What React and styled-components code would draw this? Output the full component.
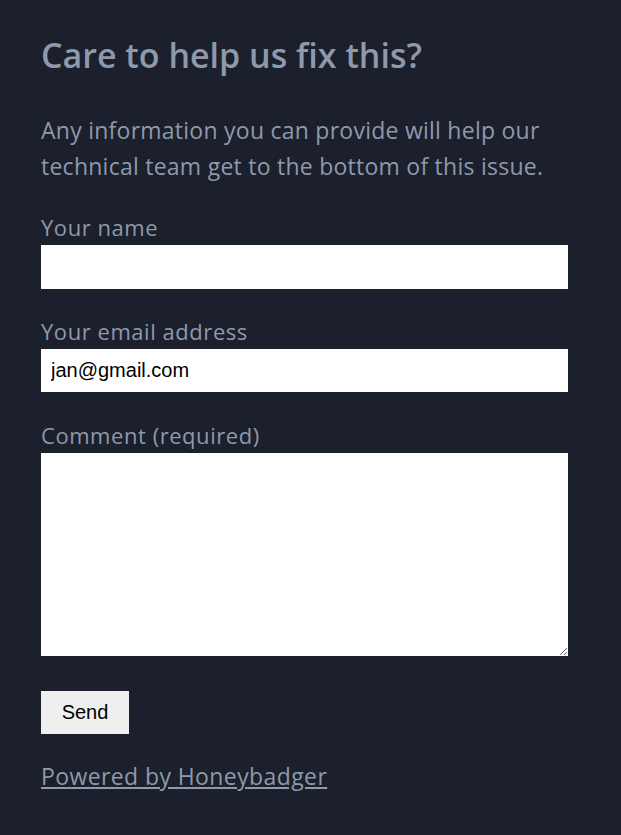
import React from 'react';
import styled, { createGlobalStyle } from 'styled-components';

const Global = createGlobalStyle`
  html, body {
    margin: 0;
    padding: 0;
    background: #1b202c;
  }
  body {
    font-family: "Open Sans", Lato, sans-serif;
    color: #8e99ab;
  }
`;

const Page = styled.div`
  width: 527px;
  padding: 30px 0 40px 41px;
`;

const Title = styled.h1`
  margin: 0 0 32px;
  font-size: 34px;
  font-weight: 600;
  line-height: 50px;
  letter-spacing: 0;
`;

const Intro = styled.p`
  margin: 0 0 28px;
  font-size: 23px;
  line-height: 36px;
  letter-spacing: 0.25px;
`;

const Field = styled.div`
  display: flex;
  flex-direction: column;
  gap: 3px;
  margin-bottom: ${(p) => p.$space || 27}px;
`;

const Label = styled.label`
  font-size: 22px;
  line-height: 30px;
  letter-spacing: 0.55px;
`;

const Input = styled.input`
  box-sizing: border-box;
  width: 100%;
  height: ${(p) => p.$h || 44}px;
  border: none;
  padding: 0 10px;
  font-family: "Liberation Sans", Arial, sans-serif;
  font-size: 20px;
  color: #000;
  background: #fff;
  outline: none;
`;

const TextArea = styled.textarea`
  box-sizing: border-box;
  width: 100%;
  height: 203px;
  border: none;
  padding: 10px;
  font-family: "Liberation Sans", Arial, sans-serif;
  font-size: 20px;
  background: #fff;
  resize: vertical;
  display: block;
  outline: none;
`;

const Button = styled.button`
  width: 88px;
  height: 43px;
  border: none;
  background: #efefef;
  color: #000;
  font-family: "Liberation Sans", Arial, sans-serif;
  font-size: 20px;
  cursor: pointer;
`;

const Footer = styled.p`
  margin: 26px 0 0;
  font-size: 23px;
  line-height: 32px;
  letter-spacing: 0.4px;
`;

const Link = styled.a`
  color: #8e99ab;
  text-decoration: underline;
`;

export default function App() {
  return (
    <>
      <Global />
      <Page>
        <Title>Care to help us fix this?</Title>
        <Intro>
          Any information you can provide will help our technical team get to the bottom of this issue.
        </Intro>
        <form onSubmit={(e) => e.preventDefault()}>
          <Field>
            <Label htmlFor="name">Your name</Label>
            <Input id="name" type="text" />
          </Field>
          <Field $space={28}>
            <Label htmlFor="email">Your email address</Label>
            <Input id="email" type="email" $h={43} defaultValue="jan@gmail.com" />
          </Field>
          <Field $space={35}>
            <Label htmlFor="comment">Comment (required)</Label>
            <TextArea id="comment" />
          </Field>
          <Button type="submit">Send</Button>
        </form>
        <Footer>
          <Link href="#">Powered by Honeybadger</Link>
        </Footer>
      </Page>
    </>
  );
}
